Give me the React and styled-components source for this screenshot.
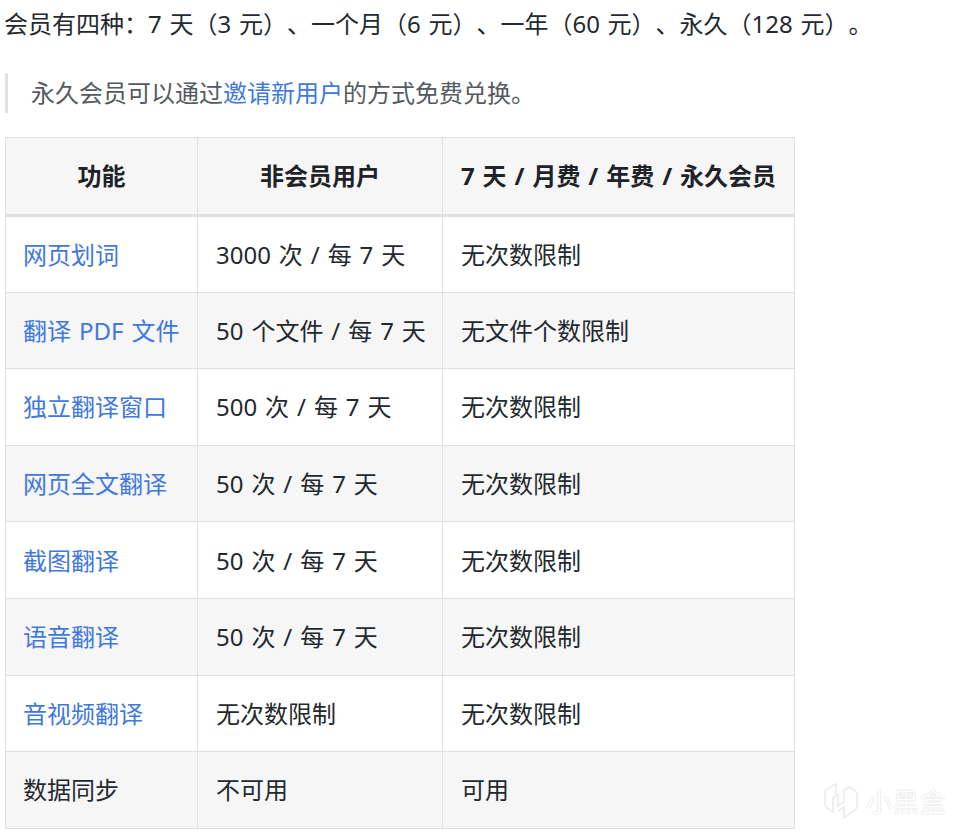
import React from 'react';
import styled, { createGlobalStyle } from 'styled-components';

const GlobalStyle = createGlobalStyle`
  html, body {
    margin: 0;
    padding: 0;
    background: #fff;
  }
  body {
    width: 973px;
    height: 839px;
    overflow: hidden;
    font-family: "Noto Sans", "Noto Sans CJK SC", sans-serif;
    font-size: 24px;
    word-spacing: 1.7px;
    text-spacing-trim: space-all;
    color: #24292e;
  }
`;

const Page = styled.div`
  position: relative;
  height: 839px;
  padding: 6px 0 0 5px;
  box-sizing: border-box;
`;

const Intro = styled.p`
  margin: 0 0 0 -1px;
  height: 36px;
  line-height: 36px;
  word-spacing: 1.5px;
  white-space: nowrap;
  color: #24292e;
`;

const Quote = styled.blockquote`
  margin: 31px 0 24px;
  height: 40px;
  line-height: 40px;
  padding-left: 23px;
  border-left: 3px solid #dfe2e5;
  color: #555a60;
  white-space: nowrap;
`;

const Link = styled.a`
  color: #4078e0;
  text-decoration: none;
`;

const Table = styled.table`
  border-collapse: collapse;
  table-layout: fixed;
  width: 789px;
`;

const HeadCell = styled.th`
  height: 78px;
  padding: 0 0 3px;
  box-sizing: border-box;
  background: #f6f6f7;
  border: 1px solid #dfe2e5;
  border-bottom: 3px solid #dfe2e5;
  font-weight: 700;
  text-align: center;
  color: #1f2328;
  white-space: nowrap;
`;

const Row = styled.tr`
  background: ${(p) => (p.$striped ? '#f6f6f7' : '#fff')};
`;

const Cell = styled.td`
  height: 76.6px;
  padding: 0 0 2px 18px;
  box-sizing: border-box;
  border: 1px solid #dfe2e5;
  white-space: nowrap;
  color: #24292e;
  &:first-child {
    padding-left: 17px;
  }
`;

const Watermark = styled.div`
  position: absolute;
  right: 26px;
  bottom: 17px;
  display: flex;
  align-items: center;
  gap: 8px;
  color: #fff;
  font-size: 26px;
  line-height: 1;
  letter-spacing: 1px;
  text-shadow: 0 0 1px #d4d4d4, 0 0 2px #e4e4e4;
`;

const Logo = () => (
  <svg width="34" height="40" viewBox="0 0 34 40" fill="none" stroke="#ececec" strokeWidth="1.6">
    <path d="M12 2 L3 7 Q1 8 1 11 V22 Q1 25 3 26 L9 30 V16 L12 14 Z" fill="#fff" />
    <path d="M14 12 L14 24 L20 20 V8 L25 5 L31 9 Q33 10 33 13 V24 Q33 27 31 28 L20 36 V25 L14 29" fill="#fff" />
  </svg>
);

const features = [
  ['网页划词', '3000 次 / 每 7 天', '无次数限制', true],
  ['翻译 PDF 文件', '50 个文件 / 每 7 天', '无文件个数限制', true],
  ['独立翻译窗口', '500 次 / 每 7 天', '无次数限制', true],
  ['网页全文翻译', '50 次 / 每 7 天', '无次数限制', true],
  ['截图翻译', '50 次 / 每 7 天', '无次数限制', true],
  ['语音翻译', '50 次 / 每 7 天', '无次数限制', true],
  ['音视频翻译', '无次数限制', '无次数限制', true],
  ['数据同步', '不可用', '可用', false],
];

export default function App() {
  return (
    <Page>
      <GlobalStyle />
      <Intro>会员有四种：7 天（3 元）、一个月（6 元）、一年（60 元）、永久（128 元）。</Intro>
      <Quote>
        永久会员可以通过<Link href="#">邀请新用户</Link>的方式免费兑换。
      </Quote>
      <Table>
        <colgroup>
          <col style={{ width: 192 }} />
          <col style={{ width: 245 }} />
          <col style={{ width: 352 }} />
        </colgroup>
        <thead>
          <tr>
            <HeadCell>功能</HeadCell>
            <HeadCell>非会员用户</HeadCell>
            <HeadCell>7 天 / 月费 / 年费 / 永久会员</HeadCell>
          </tr>
        </thead>
        <tbody>
          {features.map(([name, free, paid, linked], i) => (
            <Row key={name} $striped={i % 2 === 1}>
              <Cell>{linked ? <Link href="#">{name}</Link> : name}</Cell>
              <Cell>{free}</Cell>
              <Cell>{paid}</Cell>
            </Row>
          ))}
        </tbody>
      </Table>
      <Watermark>
        <Logo />
        <span>小黑盒</span>
      </Watermark>
    </Page>
  );
}
